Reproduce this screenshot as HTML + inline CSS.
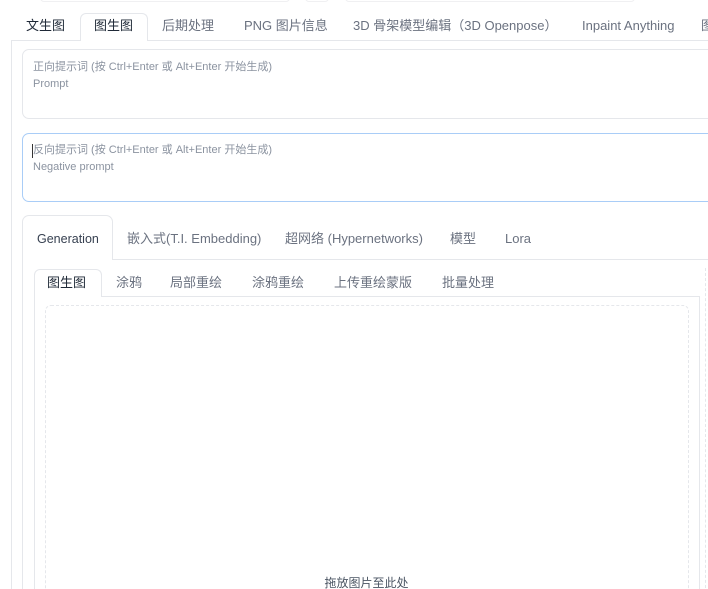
<!DOCTYPE html>
<html><head><meta charset="utf-8"><style>
*{box-sizing:border-box;margin:0;padding:0}
html,body{width:708px;height:589px;overflow:hidden}
body{background:#fff;font-family:"Liberation Sans","Noto Sans CJK SC",sans-serif;position:relative;color:#374151}
.a{position:absolute}
.tab{position:absolute;font-size:13px;line-height:16px;height:16px;color:#6b7280;top:18px;white-space:nowrap}
.ta{color:#1f2937}
.ph{font-size:11px;color:#8b93a0;line-height:17px;height:17px}
</style></head><body>
<div class="a" style="left:40px;top:-6px;width:250px;height:8px;border:1px solid #f0f0f2;border-radius:4px"></div>
<div class="a" style="left:305px;top:-6px;width:24px;height:8px;border:1px solid #f0f0f2;border-radius:4px"></div>
<div class="a" style="left:345px;top:-6px;width:290px;height:8px;border:1px solid #f0f0f2;border-radius:4px"></div>
<div class="a" style="left:11px;top:40px;width:700px;height:1px;background:#e5e7eb"></div>
<div class="a" style="left:80px;top:13px;width:68px;height:28px;border:1px solid #e5e7eb;border-bottom:none;border-radius:6px 6px 0 0;background:#fff"></div>
<div class="tab ta" style="left:26px">文生图</div>
<div class="tab ta" style="left:94px">图生图</div>
<div class="tab" style="left:162px">后期处理</div>
<div class="tab" style="left:244px">PNG 图片信息</div>
<div class="tab" style="left:353px">3D 骨架模型编辑（3D Openpose）</div>
<div class="tab" style="left:582px">Inpaint Anything</div>
<div class="tab" style="left:701px">图</div>
<div class="a" style="left:11px;top:40px;width:1px;height:560px;background:#e5e7eb"></div>
<div class="a" style="left:22px;top:49px;width:700px;height:70px;border:1px solid #e5e7eb;border-radius:7px;padding:9px 0 0 10px">
<div class="ph">正向提示词 (按 Ctrl+Enter 或 Alt+Enter 开始生成)</div><div class="ph">Prompt</div></div>
<div class="a" style="left:22px;top:133px;width:700px;height:69px;border:1px solid #a9cdf7;border-radius:7px;padding:8px 0 0 10px">
<div class="ph">反向提示词 (按 Ctrl+Enter 或 Alt+Enter 开始生成)</div><div class="ph">Negative prompt</div></div>
<div class="a" style="left:32px;top:144px;width:1px;height:14px;background:#333"></div>
<div class="a" style="left:22px;top:259px;width:700px;height:1px;background:#e5e7eb"></div>
<div class="a" style="left:22px;top:215px;width:91px;height:45px;border:1px solid #e5e7eb;border-bottom:none;border-radius:7px 7px 0 0;background:#fff"></div>
<div class="a" style="left:22px;top:259px;width:1px;height:340px;background:#e5e7eb"></div>
<div class="tab ta" style="left:37px;top:231px;font-size:12.5px;color:#374151">Generation</div>
<div class="tab" style="left:127px;top:231px">嵌入式(T.I. Embedding)</div>
<div class="tab" style="left:285px;top:231px">超网络 (Hypernetworks)</div>
<div class="tab" style="left:450px;top:231px">模型</div>
<div class="tab" style="left:505px;top:231px">Lora</div>
<div class="a" style="left:34px;top:296px;width:666px;height:1px;background:#e5e7eb"></div>
<div class="a" style="left:34px;top:269px;width:68px;height:28px;border:1px solid #e5e7eb;border-bottom:none;border-radius:6px 6px 0 0;background:#fff"></div>
<div class="a" style="left:34px;top:296px;width:1px;height:300px;background:#e5e7eb"></div>
<div class="a" style="left:699px;top:296px;width:1px;height:300px;background:#e5e7eb"></div>
<div class="tab ta" style="left:47px;top:275px">图生图</div>
<div class="tab" style="left:116px;top:275px">涂鸦</div>
<div class="tab" style="left:170px;top:275px">局部重绘</div>
<div class="tab" style="left:252px;top:275px">涂鸦重绘</div>
<div class="tab" style="left:334px;top:275px">上传重绘蒙版</div>
<div class="tab" style="left:442px;top:275px">批量处理</div>
<div class="a" style="left:45px;top:305px;width:644px;height:300px;border:1px dashed #e5e7eb;border-radius:6px"></div>
<div class="a" style="left:705px;top:268px;width:1px;height:330px;border-left:1px dashed #e5e7eb"></div>
<div class="a" style="left:0;top:575px;width:733px;text-align:center;font-size:12px;line-height:16px;color:#4b5563">拖放图片至此处</div>
</body></html>
